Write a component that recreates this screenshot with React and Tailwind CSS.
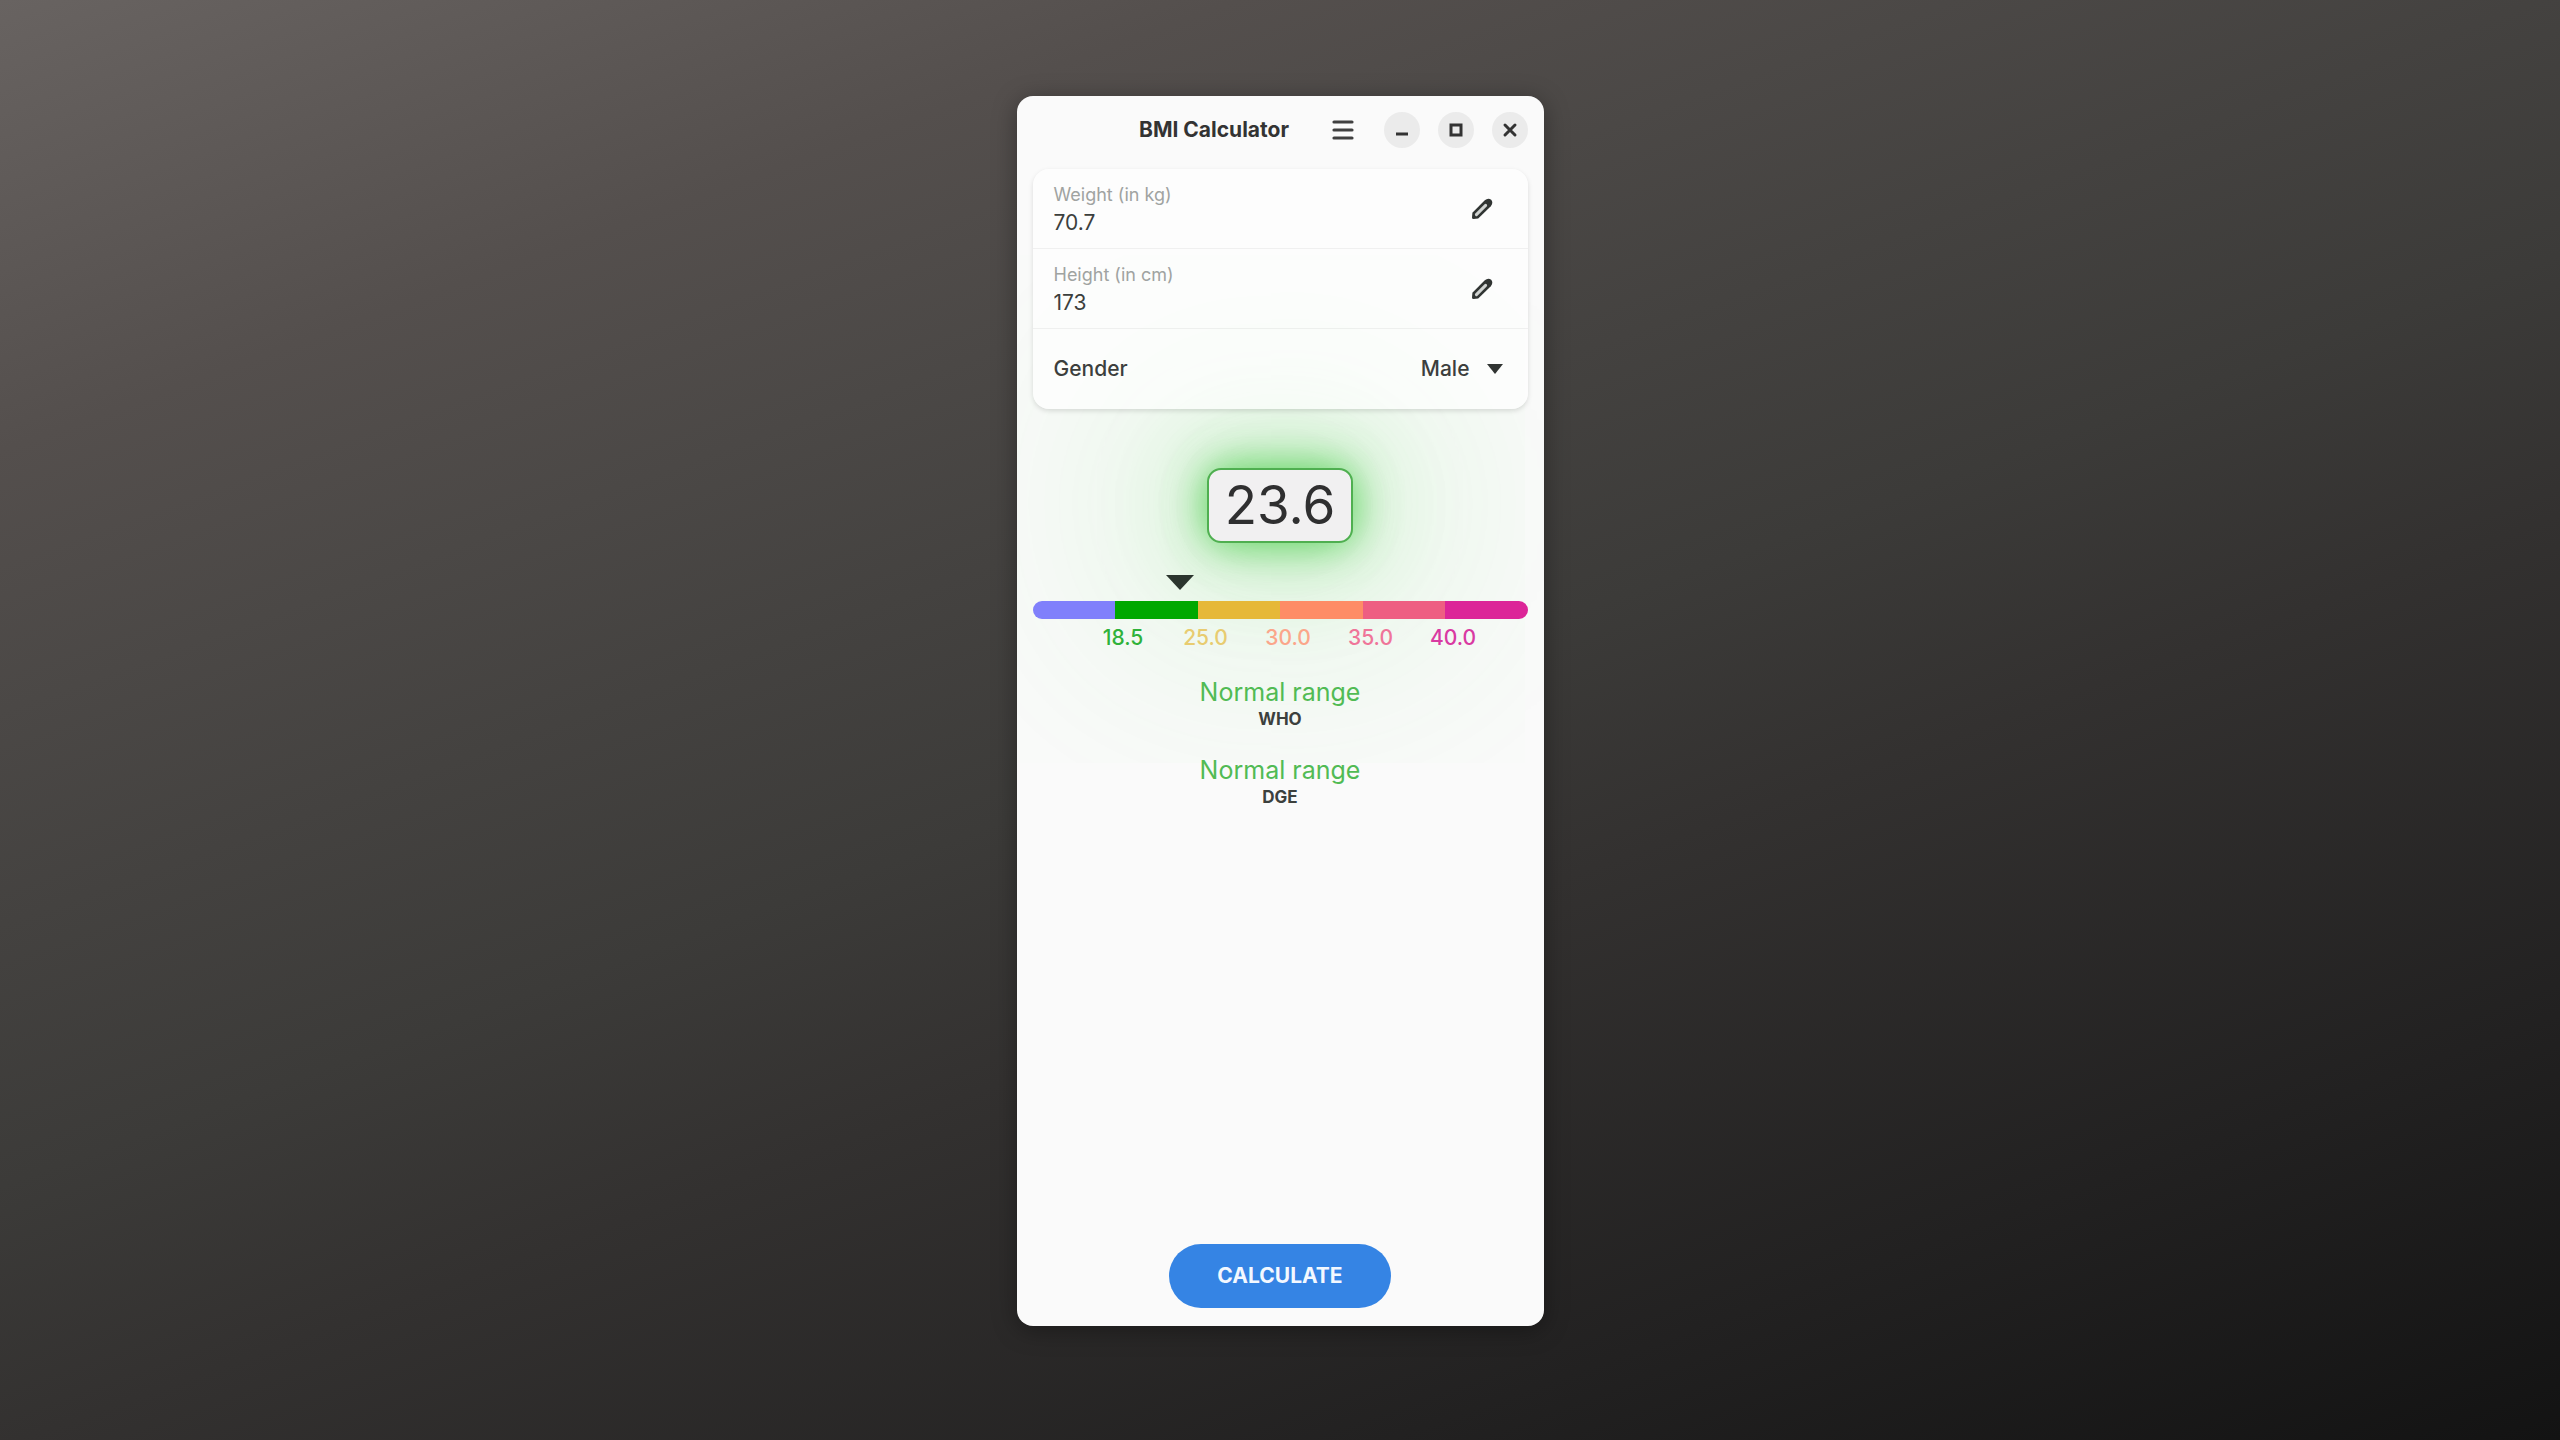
import React, { useState } from 'react';

const ranges = [
  { color: 'bg-[#8080fb]' },
  { color: 'bg-[#00a800]', start: '18.5', text: 'text-[#2fb23a]' },
  { color: 'bg-[#e6b838]', start: '25.0', text: 'text-[#e8cc70]' },
  { color: 'bg-[#fe8c66]', start: '30.0', text: 'text-[#fba68a]' },
  { color: 'bg-[#ee5e82]', start: '35.0', text: 'text-[#ef7599]' },
  { color: 'bg-[#dc2598]', start: '40.0', text: 'text-[#d93aa2]' },
];

const results = [
  { label: 'Normal range', source: 'WHO' },
  { label: 'Normal range', source: 'DGE' },
];

function PencilIcon() {
  return (
    <svg viewBox="0 0 24 24" className="size-6" fill="none" aria-hidden="true">
      <path
        d="M2 20.4 2.4 15.8 14.8 3.2Q18.2 .4 21.2 2.8 23.6 5.8 20.8 9.2L8.2 21.6 3.6 22Q2 22 2 20.4Z"
        fill="#303432"
      />
      <path d="M6.4 17.6 15.6 8.4" stroke="#d0d3d1" strokeWidth="3" strokeLinecap="round" />
    </svg>
  );
}

function WindowButton({ label, children }) {
  return (
    <button
      type="button"
      aria-label={label}
      className="flex size-9 items-center justify-center rounded-full bg-[#ebebeb] text-[#333333]"
    >
      <svg viewBox="0 0 16 16" className="size-4" fill="none" stroke="currentColor" aria-hidden="true">
        {children}
      </svg>
    </button>
  );
}

function EntryRow({ id, label, value, onChange }) {
  return (
    <div className="flex h-20 items-center border-b border-black/5 pr-[34px] pl-[21px]">
      <div className="flex min-w-0 flex-1 flex-col">
        <label htmlFor={id} className="text-[18px] leading-7 text-[#a0a3a1]">
          {label}
        </label>
        <input
          id={id}
          value={value}
          onChange={(e) => onChange(e.target.value)}
          className="w-full bg-transparent text-[21px] leading-7 text-[#3c3f3d] outline-none"
        />
      </div>
      <button type="button" aria-label={`Edit ${label}`}>
        <PencilIcon />
      </button>
    </div>
  );
}

function Scale({ bmi }) {
  // Only the normal range is a 6.5 wide step, the pointer is placed inside it
  const pointer = ((1 + (bmi - 18.5) / 6.5) / 6) * 100;

  return (
    <div className="relative mt-8 w-full">
      <svg
        viewBox="0 0 28 15"
        className="h-[15px] w-7 -translate-x-1/2"
        style={{ marginLeft: `${pointer}%` }}
        aria-hidden="true"
      >
        <path d="M0 0H28L14 15Z" fill="#2b352e" />
      </svg>
      <div className="mt-[11px] flex h-[18px] overflow-hidden rounded-full">
        {ranges.map((range) => (
          <div key={range.color} className={`flex-1 ${range.color}`} />
        ))}
      </div>
      <div className="-mr-2 grid grid-cols-6 pt-[3px] pl-2 text-[21px] leading-8 font-medium">
        {ranges.map((range) => (
          <span key={range.color} className={`-translate-x-1/2 text-center ${range.text || ''}`}>
            {range.start}
          </span>
        ))}
      </div>
    </div>
  );
}

export default function App() {
  const [weight, setWeight] = useState('70.7');
  const [height, setHeight] = useState('173');
  const [gender, setGender] = useState('Male');
  const [bmi, setBmi] = useState(23.6);

  const calculate = () => {
    const meters = Number(height) / 100;
    if (meters > 0) setBmi(Math.round((Number(weight) / meters ** 2) * 10) / 10);
  };

  return (
    <div className="flex min-h-screen justify-center bg-[linear-gradient(160deg,#686361_0%,#544f4d_19%,#4b4846_30%,#444240_39%,#3c3b39_50%,#333130_61%,#222121_82%,#131313_100%)] pt-24 pb-[114px] font-['Inter',sans-serif] text-[#333333]">
      <main className="flex w-[527px] max-w-full flex-col overflow-hidden rounded-2xl bg-[#fafafa] shadow-[0_4px_24px_rgba(0,0,0,0.35)]">
        <header className="flex items-center pt-4 pr-4 pl-20">
          <h1 className="flex-1 text-center text-[21px] leading-9 font-bold">BMI Calculator</h1>
          <button type="button" aria-label="Menu" className="mr-[30px]">
            <svg viewBox="0 0 22 20" className="h-5 w-[22px]" stroke="#404040" strokeWidth="3.2" strokeLinecap="round" aria-hidden="true">
              <path d="M2 2H20M2 10H20M2 18H20" />
            </svg>
          </button>
          <div className="flex gap-[18px]">
            <WindowButton label="Minimize">
              <path d="M2 12H14" strokeWidth="3" />
            </WindowButton>
            <WindowButton label="Maximize">
              <path d="M3 3H13V13H3Z" strokeWidth="3" />
            </WindowButton>
            <WindowButton label="Close">
              <path d="M3 3 13 13M13 3 3 13" strokeWidth="3" strokeLinecap="round" />
            </WindowButton>
          </div>
        </header>

        <div className="flex flex-1 flex-col items-center px-4 pt-[21px] pb-[18px]">
          <section className="relative z-10 w-full rounded-2xl bg-white/65 shadow-[0_2px_5px_rgba(0,0,0,0.13)]">
            <EntryRow id="weight" label="Weight (in kg)" value={weight} onChange={setWeight} />
            <EntryRow id="height" label="Height (in cm)" value={height} onChange={setHeight} />
            <div className="flex h-20 items-center justify-between pr-6 pl-[21px] text-[21px] font-medium text-[#3c3f3d]">
              <label htmlFor="gender">Gender</label>
              <div className="flex items-center">
                <select
                  id="gender"
                  value={gender}
                  onChange={(e) => setGender(e.target.value)}
                  className="field-sizing-content appearance-none bg-transparent pr-[34px] outline-none"
                >
                  <option>Male</option>
                  <option>Female</option>
                </select>
                <svg viewBox="0 0 18 10" className="pointer-events-none -ml-[18px] h-[10px] w-[18px]" aria-hidden="true">
                  <path d="M1 0H17L9 10Z" fill="#303432" />
                </svg>
              </div>
            </div>
          </section>

          <output
            htmlFor="weight height gender"
            className="mt-[59px] rounded-[14px] border-2 border-[#4faf50] bg-[#f1f0f1] px-4 text-[53px] leading-[71px] text-[#2f2f30] shadow-[0_0_44px_rgba(50,200,50,0.8),0_0_110px_rgba(50,200,50,0.35),0_0_320px_90px_rgba(50,220,50,0.14)]"
          >
            {bmi.toFixed(1)}
          </output>

          <Scale bmi={bmi} />

          <div className="mt-6 flex flex-col gap-6 text-center">
            {results.map((result) => (
              <div key={result.source}>
                <p className="text-[25px] leading-7 text-[#51bb54]">{result.label}</p>
                <p className="text-[17px] leading-[26px] font-bold text-[#3c403d]">{result.source}</p>
              </div>
            ))}
          </div>

          <button
            type="button"
            onClick={calculate}
            className="mt-auto h-16 rounded-full bg-[#3584e4] px-12 text-[21px] font-bold text-[#f3f8ff]"
          >
            CALCULATE
          </button>
        </div>
      </main>
    </div>
  );
}
